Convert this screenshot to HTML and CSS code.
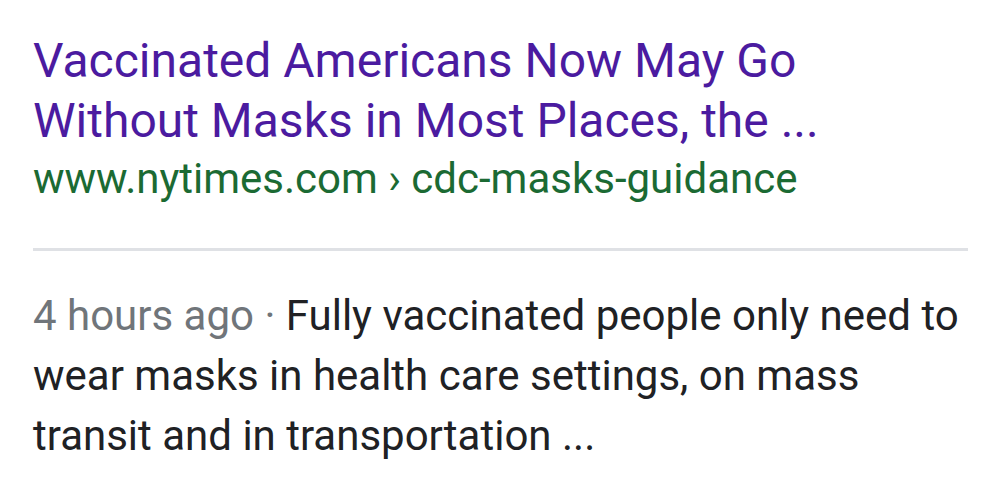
FILE: index.html
```html
<!DOCTYPE html>
<html>
<head>
<meta charset="utf-8">
<link rel="stylesheet" href="styles.css">
</head>
<body>
<div class="result">
  <div class="head">
    <a class="title" href="#">Vaccinated Americans Now May Go Without Masks in Most Places, the ...</a>
    <div class="url">www.nytimes.com › cdc-masks-guidance</div>
  </div>
  <div class="divider"></div>
  <div class="snippet"><span class="date">4 hours ago · </span>Fully vaccinated people only need to wear masks in health care settings, on mass transit and in transportation ...</div>
</div>
</body>
</html>
```
FILE: styles.css
```css
html, body {
  margin: 0;
  padding: 0;
  background: #ffffff;
}
body {
  font-family: Roboto, "Noto Sans", sans-serif;
}
.result {
  padding: 31px 15px 0 33px;
}
.head {
  padding-right: 60px;
}
.title {
  display: block;
  font-size: 48px;
  line-height: 60px;
  color: #4b1ba0;
  text-decoration: none;
}
.url {
  font-size: 42px;
  line-height: 55px;
  color: #1b6a33;
  white-space: nowrap;
}
.divider {
  height: 3px;
  background: #dfe1e5;
  margin-top: 42px;
}
.snippet {
  margin-top: 35px;
  font-size: 42px;
  line-height: 60px;
  color: #202124;
}
.date {
  color: #70757a;
}
```
